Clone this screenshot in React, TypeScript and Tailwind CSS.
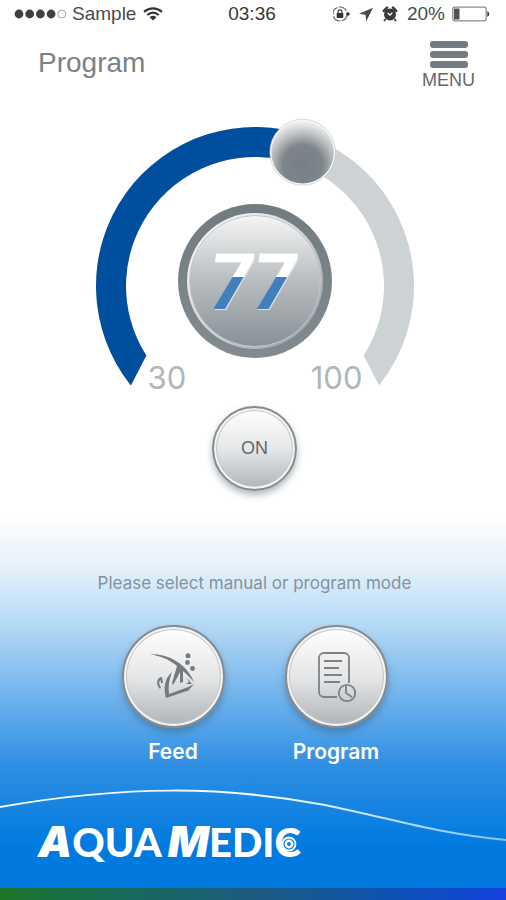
import { useState } from "react";
import type { ReactNode } from "react";

const MIN = 30;
const MAX = 100;
const CENTER = { x: 160, y: 168 };

const polar = (radius: number, angle: number) => {
  const rad = (angle * Math.PI) / 180;
  return {
    x: CENTER.x + radius * Math.sin(rad),
    y: CENTER.y - radius * Math.cos(rad),
  };
};

// Band between two radii; each end is given as an outer and an inner angle
const band = (o1: number, i1: number, o2: number, i2: number) => {
  const a = polar(159, o1);
  const b = polar(159, o2);
  const c = polar(129, i2);
  const d = polar(129, i1);
  return `M${a.x} ${a.y} A159 159 0 ${o2 - o1 > 180 ? 1 : 0} 1 ${b.x} ${b.y} L${c.x} ${c.y} A129 129 0 ${i2 - i1 > 180 ? 1 : 0} 0 ${d.x} ${d.y} Z`;
};

const StatusBar = () => (
  <div className="grid h-7 grid-cols-3 items-center pl-[14px] pr-4 text-[19px] leading-7 text-[#4a4b4d]">
    <div className="flex items-center gap-[5px]">
      <svg className="h-3 w-[53px]" viewBox="0 0 53 12" aria-hidden="true">
        <circle cx="5" cy="6" r="4.4" fill="#3f4042" />
        <circle cx="15.7" cy="6" r="4.4" fill="#3f4042" />
        <circle cx="26.4" cy="6" r="4.4" fill="#3f4042" />
        <circle cx="37.1" cy="6" r="4.4" fill="#3f4042" />
        <circle cx="47.8" cy="6" r="4" fill="none" stroke="#a0a1a3" />
      </svg>
      <span>Sample</span>
      <svg className="ml-[2px] h-[14px] w-5" viewBox="0 0 20 14" fill="none" stroke="#333436" strokeWidth="2.2" aria-label="Wi-Fi">
        <path d="M1 4.8Q10-2.2 19 4.8M4.2 8Q10 3.4 15.8 8" />
        <path d="M6.6 10.2Q10 7.4 13.4 10.2L10 13.6Z" fill="#333436" stroke="none" />
      </svg>
    </div>
    <div className="text-center text-[#38393b]">03:36</div>
    <div className="flex items-center justify-end">
      <svg className="h-[18px] w-[68px]" viewBox="0 0 68 18" aria-hidden="true">
        <circle cx="7" cy="9" r="7" fill="none" stroke="#66686a" strokeWidth="1.2" strokeDasharray="9 1.5" />
        <circle cx="15" cy="9" r="1.7" fill="#333436" />
        <rect x="3.7" y="8" width="6.6" height="5" rx=".6" fill="#333436" />
        <path d="M5.1 8.4V6.7a1.9 1.9 0 0 1 3.8 0v1.7" fill="none" stroke="#333436" strokeWidth="1.2" />
        <path d="M40 2.8 26 8.8l6.5.9.8 6.5Z" fill="#4a4b4d" />
        <circle cx="57" cy="9.5" r="6" fill="#38393b" />
        <path d="M50.8 5.8 54 2.6M63.2 5.8 60 2.6" stroke="#38393b" strokeWidth="2.6" strokeLinecap="round" />
        <path d="m52.6 14-1.6 2M61.4 14l1.6 2" stroke="#38393b" strokeWidth="1.8" />
        <path d="M54.6 8 57 10l2.4-2.4" fill="none" stroke="#fff" strokeWidth="1.3" />
      </svg>
      <span className="ml-[6px]">20%</span>
      <svg className="ml-[7px] h-4 w-[38px] shrink-0" viewBox="0 0 38 16" aria-hidden="true">
        <rect x=".8" y="1.2" width="33.4" height="13.6" rx="2" fill="#fff" stroke="#8b8c8e" strokeWidth="1.3" />
        <rect x="2" y="2.5" width="5.5" height="11" fill="#515254" />
        <path d="M35.3 5.2q2 .6 2 2.8t-2 2.8Z" fill="#3a3b3d" />
      </svg>
    </div>
  </div>
);

const Header = () => (
  <header className="flex items-start justify-between pl-[38px] pr-[31px]">
    <h1 className="pt-[19px] text-[28px] leading-8 text-[#7b8286]">Program</h1>
    <button type="button" className="flex flex-col items-center pt-[13px] text-[18px] leading-5 text-[#62686b]">
      <span className="mb-[2px] flex flex-col gap-[3px]">
        <span className="h-[7px] w-[38px] rounded-[3px] bg-[#727b81]" />
        <span className="h-[7px] w-[38px] rounded-[3px] bg-[#727b81]" />
        <span className="h-[7px] w-[38px] rounded-[3px] bg-[#727b81]" />
      </span>
      MENU
    </button>
  </header>
);

const Dial = () => {
  const [value, setValue] = useState(77);
  const angle = -129 + 258 * Math.pow((value - MIN) / (MAX - MIN), 1.385);
  const knob = polar(142, angle);

  return (
    <section className="relative flex h-[280px] w-80 flex-col items-center justify-end">
      <svg className="absolute inset-0 h-full w-full" viewBox="0 0 320 280" aria-hidden="true">
        <defs>
          <radialGradient id="knob" cx="50%" cy="70%" r="68%">
            <stop offset="0" stopColor="#757f84" />
            <stop offset=".46" stopColor="#7d868b" />
            <stop offset=".72" stopColor="#b9bdbf" />
            <stop offset="1" stopColor="#f1f2f2" />
          </radialGradient>
        </defs>
        <path d={band(-128.7, -122.6, 128.7, 122.6)} fill="#cdd2d4" />
        <path d={band(-128.7, -122.6, angle, angle)} fill="#004f9f" />
        <circle cx={knob.x} cy={knob.y} r="32" fill="url(#knob)" stroke="#f5f6f6" strokeWidth="1.5" />
        <circle cx={knob.x} cy={knob.y} r="33" fill="none" stroke="#b5babc" strokeWidth=".5" />
      </svg>
      <input
        type="range"
        aria-label="Power"
        min={MIN}
        max={MAX}
        value={value}
        onChange={(e) => setValue(Number(e.target.value))}
        className="absolute inset-0 z-10 h-full w-full cursor-pointer opacity-0"
      />
      <div className="relative flex h-[154px] w-[154px] items-center justify-center rounded-full bg-linear-to-b from-[#727b80] to-[#828b90] p-[9px]">
        <div className="h-full w-full rounded-full bg-linear-to-br from-white via-[#d3d6d8] to-[#8d969b] p-[2px]">
          <div className="flex h-full w-full items-center justify-center rounded-full border border-[#c5c9cb] bg-linear-to-b from-[#f4f5f5] via-[#b9bdc0] to-[#899196] pt-1">
            <output className="bg-linear-to-b from-white from-43% to-[#427fbd] to-43% bg-clip-text pr-1 font-[Roboto] text-[78px] font-bold italic leading-[92px] text-transparent drop-shadow-[1px_1px_0px_#dde1e3]">
              {value}
            </output>
          </div>
        </div>
      </div>
      <div className="relative flex w-full justify-between pl-[53px] pr-[52px] font-[Inter] text-[31px] leading-10 text-[#b2b6b8]">
        <span>{MIN}</span>
        <span>{MAX}</span>
      </div>
    </section>
  );
};

const round =
  "flex items-center justify-center rounded-full border-2 border-[#858b8f] bg-linear-to-b from-white via-[#e6e7e8] to-[#aeb4b7] shadow-[inset_0_0_0_2px_#f3f4f4,inset_0_0_0_3px_#c4c8ca,0_4px_7px_rgba(60,75,90,0.4)]";

const ModeButton = ({ label, children }: { label: string; children: ReactNode }) => (
  <button type="button" className="flex w-[104px] flex-col items-center font-[Inter] text-[21px] font-semibold leading-7 text-white">
    <span className={`${round} mb-[10px] h-[103px] w-[103px]`}>{children}</span>
    {label}
  </button>
);

const FishIcon = () => (
  <svg className="h-12 w-12" viewBox="0 0 48 48" fill="#737b80" aria-hidden="true">
    <path d="M0 1C12 1 22 4 30 10C37 15 42 22 45 29C41 25 38 21 34 18L34 29L31 30L31 19L27 27L24 32L23 30L28 13C21 7 12 3 0 1Z" />
    <path d="M23 19C20 27 19 33 20 41L42 33L38 38L17 45C14 34 16 25 23 19Z" />
    <path d="M37 24 43 31 37 31 40 29ZM45 31 39 38 35 38 41 33Z" />
    <path d="M13 24C8 24 6 31 11 36L12 34.5C9.500 31 10 28 11.500 27L12 30 14 30Z" />
    <circle cx="39" cy="2.800" r="2.5" />
    <circle cx="38.5" cy="9.5" r="2.4" />
    <circle cx="43.5" cy="15.5" r="2.4" />
  </svg>
);

const ScheduleIcon = () => (
  <svg className="h-[52px] w-10" viewBox="0 0 40 52" fill="none" stroke="#7b8387" strokeWidth="1.8" aria-hidden="true">
    <path d="M21 46H8a5 5 0 0 1-5-5V7a5 5 0 0 1 5-5h20a5 5 0 0 1 5 5v25" />
    <path d="M8 10h18M8 17h15M8 24h18M8 31h16" />
    <circle cx="31" cy="42" r="8.2" />
    <path d="M30 35v7l6 4" />
  </svg>
);

const Logo = () => (
  <a href="#" aria-label="Aqua Medic" className="flex w-max items-baseline font-[Lato] text-[40px] font-black leading-[48px] text-white">
    <span className="font-[Inter] text-[43px] italic">A</span>
    <span>QUA</span>
    <span className="ml-[6px] font-[Inter] text-[43px] italic">M</span>
    <span>EDI</span>
    <span className="relative">
      C
      <svg className="absolute left-[7px] top-[18px] h-4 w-4" viewBox="0 0 16 16" aria-hidden="true">
        <circle cx="8" cy="8" r="7.4" fill="#fff" />
        <circle cx="8" cy="8" r="5" fill="none" stroke="#0b7fe0" strokeWidth="1.2" />
        <circle cx="8" cy="8" r="2" fill="#0b7fe0" />
      </svg>
    </span>
  </a>
);

export default function App() {
  return (
    <div className="flex min-h-screen flex-col bg-[linear-gradient(to_bottom,#fff_0%,#fff_57%,#e6f2fb_62.8%,#b8dbf6_69%,#2f8fe3_85%,#007adf_94%)] font-['Liberation_Sans',Arial,sans-serif]">
      <StatusBar />
      <Header />
      <main className="flex flex-1 flex-col items-center pl-[3px] pt-7">
        <Dial />
        <button type="button" className={`${round} mt-2 h-[85px] w-[85px] text-[18px] text-[#62696d]`}>
          ON
        </button>
        <p className="mt-[80px] font-[Inter] text-[17px] leading-6 text-[#84929d]">
          Please select manual or program mode
        </p>
        <div className="mt-[30px] flex gap-[59px]">
          <ModeButton label="Feed">
            <FishIcon />
          </ModeButton>
          <ModeButton label="Program">
            <ScheduleIcon />
          </ModeButton>
        </div>
      </main>
      <footer className="relative pt-[30px]">
        <svg className="absolute inset-x-0 top-0 h-[60px] w-full" viewBox="0 0 506 60" preserveAspectRatio="none" fill="none" aria-hidden="true">
          <defs>
            <linearGradient id="wave">
              <stop offset=".55" stopColor="#eff8ff" />
              <stop offset="1" stopColor="#80c2f8" />
            </linearGradient>
          </defs>
          <path d="M0 20C125-2 225-1 325 18C397 33 440 47 506 53" stroke="url(#wave)" strokeWidth="2" />
        </svg>
        <div className="relative pb-[22px] pl-[38px]">
          <Logo />
        </div>
        <div className="h-3 bg-linear-to-r from-[#1c7524] via-[#1d5b7f] to-[#1540de]" />
      </footer>
    </div>
  );
}
